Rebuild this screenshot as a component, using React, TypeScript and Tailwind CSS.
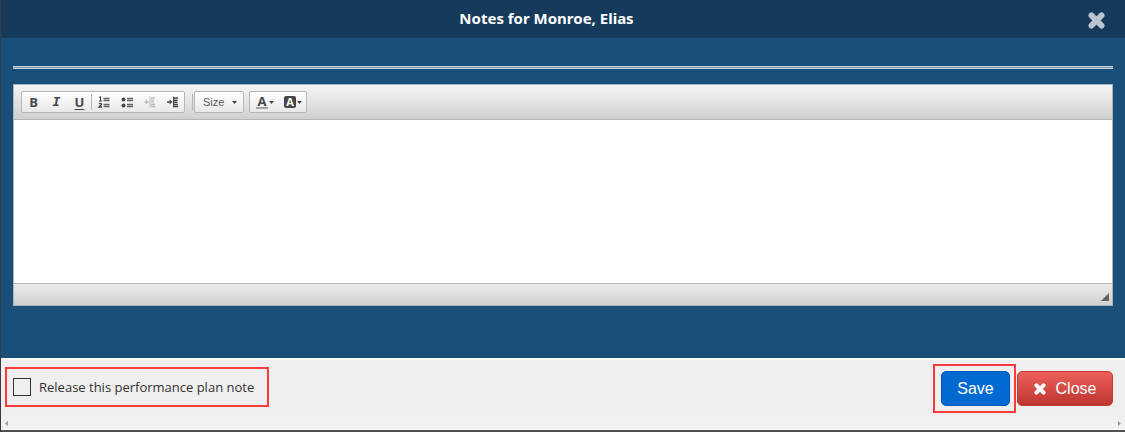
import { useState } from "react";
import type { ReactNode } from "react";

type IconProps = { className?: string };

const CrossIcon = ({ className }: IconProps) => (
  <svg className={className} viewBox="0 0 16 16" aria-hidden="true">
    <path
      d="M3.2 3.2 L12.8 12.8 M12.8 3.2 L3.2 12.8"
      stroke="currentColor"
      strokeWidth="5.4"
      strokeLinecap="round"
    />
  </svg>
);

const CaretIcon = () => (
  <svg className="h-[3px] w-[5px]" viewBox="0 0 5 3" aria-hidden="true">
    <path d="M0 0H5L2.5 3Z" fill="#474747" />
  </svg>
);

const NumberedListIcon = () => (
  <svg className="size-4" viewBox="0 0 16 16" fill="none" aria-hidden="true">
    <path d="M3 3.5L4.5 2.5V7M3 7H6" stroke="#474747" />
    <path d="M3 10C4 9 5.5 9.5 5.5 10.5L3 13H6" stroke="#474747" strokeWidth="1.3" />
    <path d="M7.5 4.5H13.5M7.5 6.5H13.5M7.5 10.5H13.5M7.5 12.5H13.5" stroke="#666" strokeWidth="1.4" />
  </svg>
);

const BulletListIcon = () => (
  <svg className="size-4" viewBox="0 0 16 16" fill="none" aria-hidden="true">
    <circle cx="4.5" cy="5.5" r="2" fill="#474747" />
    <circle cx="4.5" cy="11.5" r="2" fill="#474747" />
    <path d="M8 4.5H14M8 6.5H14M8 10.5H14M8 12.5H14" stroke="#666" strokeWidth="1.4" />
  </svg>
);

const OutdentIcon = () => (
  <svg className="size-4 opacity-30" viewBox="0 0 16 16" fill="none" aria-hidden="true">
    <path d="M8 2.5V13.5" stroke="#474747" />
    <path d="M9 4H13M9 6.2H12M9 8.2H12M9 10.5H13M9 12.5H13" stroke="#474747" strokeWidth="1.3" />
    <path d="M4 8H7" stroke="#474747" strokeWidth="1.5" />
    <path d="M2 8L5 5.5V10.5Z" fill="#474747" />
  </svg>
);

const IndentIcon = () => (
  <svg className="size-4" viewBox="0 0 16 16" fill="none" aria-hidden="true">
    <path d="M8.5 2.5V13.5" stroke="#474747" />
    <path d="M9 4H13M9 6.2H12.5M9 8.2H12.5M9 10.5H13M9 12.5H13" stroke="#474747" strokeWidth="1.4" />
    <path d="M2 8H6" stroke="#474747" strokeWidth="1.5" />
    <path d="M7.5 8L4.5 5.5V10.5Z" fill="#474747" />
  </svg>
);

const ToolGroup = ({ children }: { children: ReactNode }) => (
  <div className="flex h-[22px] items-center rounded-xs border border-[#b6b6b6] bg-linear-to-b from-white to-[#e8e8e8]">
    {children}
  </div>
);

type ToolButtonProps = {
  label: string;
  disabled?: boolean;
  children: ReactNode;
};

const ToolButton = ({ label, disabled, children }: ToolButtonProps) => (
  <button
    type="button"
    aria-label={label}
    disabled={disabled}
    className="flex h-5 w-[23px] items-center justify-center text-[13px] leading-4 font-bold text-[#474747]"
  >
    {children}
  </button>
);

const Toolbar = () => (
  <div className="flex h-[35px] items-center border-b border-[#b6b6b6] bg-linear-to-b from-[#f5f5f5] to-[#cfd1cf] pl-[7px] font-['Open_Sans',sans-serif]">
    <ToolGroup>
      <ToolButton label="Bold">B</ToolButton>
      <ToolButton label="Italic">
        <span className="font-['DejaVu_Sans_Mono',monospace] italic">I</span>
      </ToolButton>
      <ToolButton label="Underline">
        <span className="underline underline-offset-2">U</span>
      </ToolButton>
      <div className="h-4 w-px bg-[#b6b6b6]" />
      <ToolButton label="Numbered list">
        <NumberedListIcon />
      </ToolButton>
      <ToolButton label="Bulleted list">
        <BulletListIcon />
      </ToolButton>
      <ToolButton label="Decrease indent" disabled>
        <OutdentIcon />
      </ToolButton>
      <ToolButton label="Increase indent">
        <IndentIcon />
      </ToolButton>
    </ToolGroup>
    <div className="mr-px ml-[7px] h-4 w-px bg-[#b6b6b6]" />
    <ToolGroup>
      <button
        type="button"
        aria-haspopup="listbox"
        className="flex h-5 w-12 items-center justify-between pr-1.5 pl-2 font-['Liberation_Sans',sans-serif] text-[11px] text-[#5a5a5a]"
      >
        Size
        <CaretIcon />
      </button>
    </ToolGroup>
    <div className="w-[5px]" />
    <ToolGroup>
      <button
        type="button"
        aria-label="Text color"
        className="flex h-5 w-7 items-center gap-px pl-1.5 text-[13px] leading-3 font-bold text-[#474747]"
      >
        <span className="w-3 border-b-2 border-[#a0a0a0] text-center">A</span>
        <CaretIcon />
      </button>
      <button
        type="button"
        aria-label="Background color"
        className="flex h-5 w-7 items-center gap-px pl-1.5 text-[11px] leading-3 font-bold text-white"
      >
        <span className="w-3 rounded-xs bg-[#474747] text-center">A</span>
        <CaretIcon />
      </button>
    </ToolGroup>
  </div>
);

const NoteEditor = () => {
  const [note, setNote] = useState("");

  return (
    <div className="border border-[#a5b5c2] bg-white">
      <Toolbar />
      <textarea
        aria-label="Note"
        className="block h-[163px] w-full resize-none bg-white p-2 text-sm outline-none"
        onChange={(e) => setNote(e.target.value)}
        value={note}
      />
      <div className="flex h-[22px] items-end justify-end border-t border-[#b6b6b6] bg-linear-to-b from-[#ebebeb] to-[#cfd1cf] pr-[3px] pb-1">
        <svg className="size-2" viewBox="0 0 8 8" aria-hidden="true">
          <path d="M8 0V8H0Z" fill="#606060" />
        </svg>
      </div>
    </div>
  );
};

const App = () => {
  const [released, setReleased] = useState(false);

  return (
    <div className="flex min-h-screen flex-col border-l border-[#333c44] bg-[#194f78] font-['Open_Sans',sans-serif]">
      <header className="flex h-[38px] items-center bg-[#153a5b] pr-5 pb-0.5 pl-1">
        <h1 className="grow text-center font-['Noto_Sans',sans-serif] text-[15px] leading-5 font-bold text-white">
          Notes for Monroe, Elias
        </h1>
        <button
          type="button"
          aria-label="Close dialog"
          className="pt-1 text-[#b9c4ce]"
        >
          <CrossIcon className="size-[17px]" />
        </button>
      </header>

      <main className="grow px-3 pt-7">
        <div className="mb-[15px] h-[3px] border-y border-[#c5d0d9] bg-[#8199ad]" />
        <NoteEditor />
      </main>

      <footer className="flex h-[59px] items-start justify-between border-t-2 border-[#fafafa] bg-[#efefef] pt-1 pr-3 pl-1">
        <label className="mt-[3px] flex h-10 w-[264px] items-center gap-2 border-2 border-[#f93b3b] pl-1.5 text-[13px] leading-5 text-[#333]">
          <input
            type="checkbox"
            checked={released}
            onChange={(e) => setReleased(e.target.checked)}
            className="size-[18px] appearance-none border border-[#333] checked:bg-[#0069d2]"
          />
          Release this performance plan note
        </label>
        <div className="flex items-center gap-px font-['Liberation_Sans',sans-serif] text-base text-white">
          <div className="border-2 border-[#f93b3b] py-[5px] pr-1 pl-1.5">
            <button
              type="button"
              className="h-[35px] w-[69px] rounded-[5px] border border-[#0059b8] bg-[#0069d2]"
            >
              Save
            </button>
          </div>
          <button
            type="button"
            className="flex h-[35px] w-24 items-center justify-center gap-2.5 rounded-[5px] border border-[#c43c35] bg-linear-to-b from-[#ee5f5b] to-[#bd362f]"
          >
            <CrossIcon className="size-3" />
            Close
          </button>
        </div>
      </footer>

      <div className="flex h-[13px] items-center justify-between border-b border-[#fafafa] bg-[#f1f1f1] px-1">
        <svg className="h-[5px] w-[3px]" viewBox="0 0 3 5" aria-hidden="true">
          <path d="M3 0V5L0 2.5Z" fill="#999" />
        </svg>
        <svg className="h-[5px] w-[3px]" viewBox="0 0 3 5" aria-hidden="true">
          <path d="M0 0V5L3 2.5Z" fill="#999" />
        </svg>
      </div>
      <div className="h-0.5 bg-[#505050]" />
    </div>
  );
};

export default App;
